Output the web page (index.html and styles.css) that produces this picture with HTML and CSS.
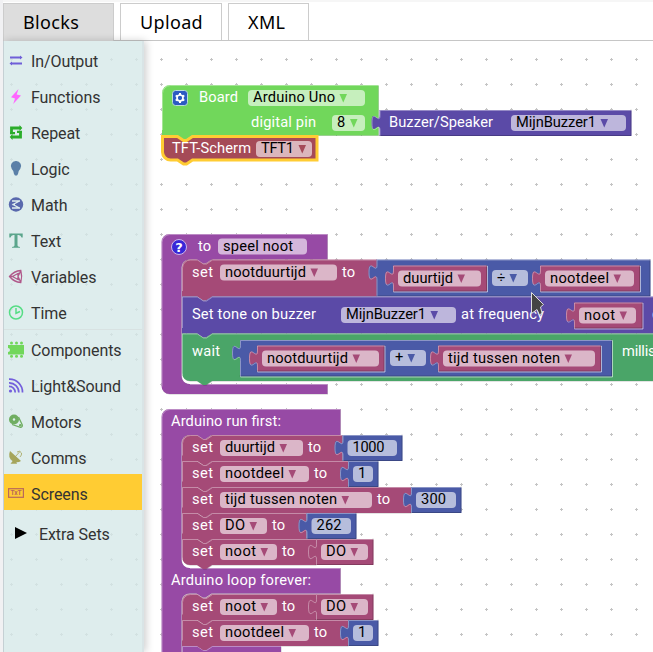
FILE: index.html
```
<!DOCTYPE html>
<html lang="en">
<head>
<meta charset="utf-8">
<title>Block editor</title>
<link rel="stylesheet" href="styles.css">
</head>
<body>
<div class="app">
  <nav class="tabs">
    <div class="tab tab-active">Blocks</div>
    <div class="tab tab-upload">Upload</div>
    <div class="tab tab-xml">XML</div>
  </nav>
  <main class="editor">
    <aside class="toolbox">
      <div class="item"><svg class="icon" viewBox="0 0 16 16"><path d="M2 4.500H13M3 10.500H14" stroke="#6f5fd8" stroke-width="2"/><path d="M12 2.500L14.500 4.500L12 6.500ZM4 8.500L1.500 10.500L4 12.500Z" fill="#6f5fd8"/></svg><span>In/Output</span></div>
      <div class="item"><svg class="icon" viewBox="0 0 16 16"><path d="M10.500 0L3 8.300L7 9.500L5.200 15L13 6.600L8.700 5.600Z" fill="#ff66ff"/></svg><span>Functions</span></div>
      <div class="item"><svg class="icon" viewBox="0 0 16 16"><path d="M3.500 9V3H12.500M12.500 6V12H3.500" fill="none" stroke="#2bad2b" stroke-width="2.800"/><path d="M11.500 0L14.300 3L11.500 6ZM4.500 9L1.700 12L4.500 15Z" fill="#2bad2b"/><path d="M2.100 7H7V9.300H2.100ZM9 5.700H13.900V8H9Z" fill="#2bad2b"/></svg><span>Repeat</span></div>
      <div class="item"><svg class="icon" viewBox="0 0 16 16"><path d="M8 0A5 5 0 0 0 3.800 8Q6 10 6 13L7 14.500H9L10 13Q10 10 12.200 8A5 5 0 0 0 8 0Z" fill="#5b80a8"/></svg><span>Logic</span></div>
      <div class="item"><svg class="icon" viewBox="0 0 16 16"><circle cx="8" cy="7.500" r="7.200" fill="#5969ad"/><path d="M4 4H12M4 11H12M11.500 4L5 7.500L11.500 11M4.500 7.500H7" fill="none" stroke="#dfeeee" stroke-width="1.300"/></svg><span>Math</span></div>
      <div class="item"><svg class="icon" viewBox="0 0 16 16"><path d="M1.300 .500H14.700V4.500H13.500Q13 1.900 10.500 1.900H9.500V12.500Q9.500 13.700 12 13.900V14.700H4V13.900Q6.500 13.700 6.500 12.500V1.900H5.500Q3 1.900 2.500 4.500H1.300Z" fill="#5ba58c"/></svg><span>Text</span></div>
      <div class="item"><svg class="icon" viewBox="0 0 16 16"><path d="M1.500 7.500Q6 2 12.800 1.500Q14.500 7.500 12.800 13.500Q6 13 1.500 7.500ZM1.500 7.500H4.500M10 7.500L12.800 1.700M10 7.500L12.800 13.300M4.500 7.500L10.800 4M4.500 7.500L10.800 11M10 4.500V10.500" fill="none" stroke="#b0588a" stroke-width="1.300"/></svg><span>Variables</span></div>
      <div class="item"><svg class="icon" viewBox="0 0 16 16"><circle cx="8" cy="7.500" r="6.500" fill="none" stroke="#56dd85" stroke-width="1.500"/><path d="M8 3V8.300L12 6.500" fill="none" stroke="#56dd85" stroke-width="1.500"/></svg><span>Time</span></div>
      <div class="separator"></div>
      <div class="item"><svg class="icon" viewBox="0 0 16 16"><path d="M0 3H16V12.500H0V10A2 2 0 0 0 0 6Z" fill="#71d75b"/><g fill="#71d75b"><circle cx="3.500" cy="1" r="1.500"/><circle cx="8.500" cy="1" r="1.500"/><circle cx="13.500" cy="1" r="1.500"/><circle cx="3.500" cy="14.300" r="1.500"/><circle cx="8.500" cy="14.300" r="1.500"/><circle cx="13.500" cy="14.300" r="1.500"/></g></svg><span>Components</span></div>
      <div class="item"><svg class="icon" viewBox="0 0 16 16"><path d="M1 1.200A13 13 0 0 1 14.500 14.500M1 4.800A9.500 9.500 0 0 1 10.800 14.500M1 8.400A6 6 0 0 1 7.200 14.500" fill="none" stroke="#735fdc" stroke-width="1.700"/><circle cx="2.500" cy="13" r="1.600" fill="#735fdc"/></svg><span>Light&amp;Sound</span></div>
      <div class="item"><svg class="icon" viewBox="0 0 16 16"><circle cx="6" cy="5.500" r="5" fill="#70ae62"/><circle cx="6" cy="5.500" r="1.200" fill="#dfeeee"/><path d="M10.500 3L14.300 11A1.800 1.800 0 0 1 12.500 13.300L4 10.500" fill="none" stroke="#70ae62" stroke-width="1.300"/><circle cx="12.300" cy="11.300" r="1.300" fill="#70ae62"/></svg><span>Motors</span></div>
      <div class="item"><svg class="icon" viewBox="0 0 16 16"><path d="M2 1Q-.500 8 4.500 11Q9 13.500 13 11Z" fill="#a5a55b"/><path d="M5 10.500L2.500 13.800H9L8 11Z" fill="#a5a55b"/><path d="M7 7L12 1.500M9 2Q12 0 13.500 3Q14 5 12 7" fill="none" stroke="#a5a55b" stroke-width=".8"/></svg><span>Comms</span></div>
      <div class="item item-selected"><svg class="icon" viewBox="0 0 16 16"><rect x=".6" y="2.700" width="14.800" height="8.600" fill="none" stroke="#b9695a" stroke-width="1.200"/><text x="8" y="9.400" class="icon-text">TxT</text></svg><span>Screens</span></div>
      <div class="item item-extra"><svg class="arrow" viewBox="0 0 12 12"><path d="M0 0L12 6L0 12Z"/></svg><span>Extra Sets</span></div>
    </aside>
    <svg class="workspace" id="workspace" width="653" height="652" viewBox="0 0 653 652">
      <defs>
        <pattern id="grid" x="-1" y="-3" width="25" height="25" patternUnits="userSpaceOnUse">
          <path d="M11 12.500H14M12.500 11V14" stroke="#c4c4c4" stroke-width="1"/>
        </pattern>
      </defs>
      <rect width="653" height="652" fill="url(#grid)"/>
      <g id="blocks"></g>
      <path class="pointer" d="M531.500 292.500V313.500L537 309.500L539.500 315L542 313L540.500 307L543.500 304.500Z"/>
    </svg>
  </main>
</div>
<script src="script.js"></script>
</body>
</html>
```
FILE: styles.css
```
body {
  margin: 0;
  overflow: hidden;
  background: #fff;
  font-family: Roboto, sans-serif;
}
.app {
  display: flex;
  flex-direction: column;
  box-sizing: border-box;
  width: 653px;
  height: 652px;
  border-left: 3px solid #f1f1f3;
  overflow: hidden;
}
.tabs {
  display: flex;
  gap: 6px;
  box-sizing: border-box;
  flex: none;
  height: 41px;
  padding-top: 3px;
  border-bottom: 1px solid #c6c6c6;
  background: linear-gradient(#f6f6f6 0 2px, #fff 2px);
}
.tab {
  box-sizing: border-box;
  height: 37px;
  padding-left: 19px;
  border: 1px solid #ccc;
  border-bottom: 0;
  font: 18px/37px "Noto Sans", sans-serif;
  letter-spacing: .35px;
  color: #000;
}
.tab-active { width: 111px; height: 38px; background: #ddd; }
.tab-upload { width: 102px; }
.tab-xml { width: 81px; }
.editor {
  position: relative;
  flex: 1;
}
.workspace {
  position: absolute;
  left: -3px;
  top: -41px;
  clip-path: inset(41px 0 0 4px);
}
.toolbox {
  position: relative;
  z-index: 1;
  box-sizing: border-box;
  width: 141px;
  height: 611px;
  border-left: 1px solid #c5d0d4;
  border-right: 2px solid #d9e4e6;
  background: rgba(214, 233, 233, .8);
  box-shadow: 2px 0 8px rgba(0, 0, 0, .2);
}
.item {
  display: flex;
  align-items: center;
  gap: 7px;
  height: 36px;
  padding-left: 4px;
  font-size: 16px;
  letter-spacing: -.08px;
  color: #333;
}
.item span { padding-top: 4px; }
.icon {
  width: 16px;
  height: 16px;
  margin-top: 3px;
  overflow: visible;
}
.icon-text {
  font: bold 6.500px Roboto, sans-serif;
  text-anchor: middle;
  fill: #b9695a;
}
.separator { height: 1px; background: #d8e2e2; }
.item-selected { background: #fc3; }
.item-extra { height: 44px; padding-left: 11px; gap: 12px; }
.arrow { width: 12px; height: 12px; margin-top: 2px; }
.label, .value {
  font-family: Roboto, sans-serif;
  font-size: 14.667px;
  fill: #fff;
}
.value { fill: #000; }
.pill { fill: #fff; fill-opacity: .6; }
.shade { fill: #000; fill-opacity: .22; }
.highlight { fill: none; stroke: #fff; stroke-opacity: .36; }
.selected { stroke: #fc3; stroke-width: 3px; }
.socket { fill: none; stroke: #fff; stroke-opacity: .55; }
.pointer { fill: #444; stroke: #ddd; stroke-width: 1px; }
.help { font: bold 13px "DejaVu Sans", sans-serif; fill: #fff; text-anchor: middle; }
```
FILE: script.js
```
const NS = 'http://www.w3.org/2000/svg';
const layer = document.getElementById('blocks');
const GREEN = '#71d75b', BLUE = '#4a5aa7', VIOLET = '#5b4aa7', ROSE = '#a54a77',
  PURPLE = '#974aa5', TEAL = '#4aa568', RED = '#a54a57';
const TAB_UP = 'V20c0,-10 -8,8 -8,-7.5s8,2.5 8,-7.5';

function add(tag, attrs, text) {
  const el = document.createElementNS(NS, tag);
  for (const k in attrs) el.setAttribute(k, attrs[k]);
  if (text) el.textContent = text;
  layer.append(el);
}
function at(x, y) { return `translate(${x} ${y})`; }

// Statement block: optional rounded corners and bottom notch.
function stack(x, y, w, h, color, o = {}) {
  const top = (o.round ? 'V8A8,8 0 0,1 8,0' : 'V0') + (o.hat ? '' : 'H15l6,4h3l6,-4') + 'H' + w;
  const foot = (o.plain ? '' : 'H30l-6,4h-3l-6,-4') + (o.end ? 'H8A8,8 0 0,1 0,' + (h - 8) : 'H0');
  const d = `M0,8${top}V${h}${foot}Z`;
  if (!o.selected) add('path', {d, class: 'shade', transform: at(x + .5, y + .5)});
  add('path', {d, fill: color, transform: at(x, y), class: o.selected ? 'selected' : ''});
  if (!o.selected) add('path', {d: `M0,${h - 6}${top}`, class: 'highlight', transform: at(x + .5, y + .5)});
}
// Value block with a puzzle tab on its left edge.
function value(x, y, w, h, color, inset) {
  const d = `M0,0H${w}V${h}H0${TAB_UP}Z`;
  add('path', {d, fill: color, transform: at(x, y)});
  add('path', {d: `M0,${h}H${w}V0`, fill: 'none', stroke: '#000', 'stroke-opacity': .2, transform: at(x - .5, y - .5)});
  add('path', {d: `M0,${h}${TAB_UP}V0H${w}`, class: 'highlight', transform: at(x + .5, y + .5)});
  if (inset) add('path', {d: `M0,${h}H${w}V0`, class: 'socket', transform: at(x + .5, y + .5)});
}
function label(x, y, w, text) {
  add('text', {x, y, textLength: w, class: 'label'}, text);
}
function field(x, y, w, text, tw, color) {
  add('rect', {x, y, width: w, height: 16, rx: 4, class: 'pill'});
  add('text', {x: x + 5, y: y + 12, textLength: tw, class: 'value'}, text);
  if (color) {
    const a = x + tw + 9.5;
    add('path', {d: `M${a},${y + 4}h7.500l-3.750,8.500Z`, fill: color});
  }
}

// Board
stack(162, 85, 216.5, 50.5, GREEN, {round: true, hat: true});
add('rect', {x: 172.5, y: 90.5, width: 15, height: 15, rx: 3, fill: '#2c5ac2', stroke: '#b8dcd9'});
add('path', {d: 'M180,93v10M175.700,95.500l8.600,5M175.700,100.500l8.600,-5', stroke: '#fff', 'stroke-width': 2});
add('circle', {cx: 180, cy: 98, r: 3, fill: '#2c5ac2', stroke: '#fff', 'stroke-width': 1.7});
label(199, 102, 39, 'Board');
field(248, 90, 117, 'Arduino Uno', 82, GREEN);
label(251, 127, 65, 'digital pin');
field(332, 115, 33, '8', 8.5, GREEN);
value(379.5, 110, 252, 26, VIOLET);
label(389, 127, 104, 'Buzzer/Speaker');
field(511, 115, 115, 'MijnBuzzer1', 80, VIOLET);
stack(162.5, 136.5, 154.5, 23.5, RED, {end: true, selected: true});
label(172, 153, 79, 'TFT-Scherm');
field(256, 141, 56, 'TFT1', 33, RED);

// Procedure definition
const proc = 'M0,8A8,8 0 0,1 8,0H166V25.500H50l-6,4h-3l-6,-4H28a8,8 0 0,0 -8,8V142a8,8 0 0,0 8,8H166V160H8A8,8 0 0,1 0,152Z';
add('path', {d: proc, class: 'shade', transform: at(162, 234.5)});
add('path', {d: proc, fill: PURPLE, transform: at(161.5, 234)});
add('path', {d: 'M0,152V8A8,8 0 0,1 8,0H165M28,150H165', class: 'highlight', transform: at(162, 234.5)});
add('circle', {cx: 179, cy: 247, r: 7.5, fill: '#3827d8', stroke: '#cdb5e8'});
add('text', {x: 179, y: 251.5, class: 'help'}, '?');
label(198, 251, 13, 'to');
field(218, 238.5, 89, 'speel noot', 70);
stack(182, 259.5, 195, 37, ROSE, {round: true});
label(192, 277, 21, 'set');
field(220, 264.5, 117, 'nootduurtijd', 81, ROSE);
label(342, 277, 13, 'to');
value(376.5, 259.5, 274, 37, BLUE);
value(393, 265.5, 94, 26, ROSE, true);
field(398, 270.5, 83, 'duurtijd', 50, ROSE);
field(492, 270, 36, '÷', 8, BLUE);
value(540, 265.5, 100, 26, ROSE, true);
field(545, 270.5, 89, 'nootdeel', 59, ROSE);
stack(182, 296.5, 480, 37, VIOLET);
label(192, 319, 124, 'Set tone on buzzer');
field(341, 307, 115, 'MijnBuzzer1', 80, VIOLET);
label(461, 319, 83, 'at frequency');
value(574, 302.5, 68.5, 26, ROSE, true);
field(579, 307.5, 57, 'noot', 31, ROSE);
label(652, 319, 56, 'duration');
stack(182, 333.5, 480, 47.5, TEAL, {end: true});
label(192, 356, 28, 'wait');
value(240, 340, 372, 36.5, BLUE, true);
value(257, 345.5, 127.5, 26, ROSE, true);
field(262, 350.5, 117, 'nootduurtijd', 81, ROSE);
field(390, 350, 36, '+', 8, BLUE);
value(438, 345.5, 163, 26, ROSE, true);
field(443, 350.5, 152, 'tijd tussen noten', 112, ROSE);
label(622, 356, 80, 'milliseconds');

// Main program
const main = 'M0,8A8,8 0 0,1 8,0H179V26H50l-6,4h-3l-6,-4H28a8,8 0 0,0 -8,8V151a8,8 0 0,0 8,8H179V184.500H50l-6,4h-3l-6,-4H28a8,8 0 0,0 -8,8V260H0Z';
add('path', {d: main, class: 'shade', transform: at(162, 409.5)});
add('path', {d: main, fill: PURPLE, transform: at(161.5, 409)});
add('path', {d: 'M0,250V8A8,8 0 0,1 8,0H178M28,159H178', class: 'highlight', transform: at(162, 409.5)});
label(171, 426, 110, 'Arduino run first:');
label(171, 585, 140, 'Arduino loop forever:');

function setRow(y, name, tw, pillW, edge, val, vw, valueTw, o = {}) {
  stack(182, y, edge - 182, 26, ROSE, o);
  label(192, y + 17, 21, 'set');
  field(220, y + 5, pillW, name, tw, ROSE);
  label(225 + pillW, y + 17, 13, 'to');
  const isVariable = val === 'DO';
  value(edge, y, vw, 26, isVariable ? ROSE : BLUE);
  field(edge + 5, y + 5, vw - 10.5, val, valueTw, isVariable && ROSE);
}
setRow(435, 'duurtijd', 50, 83, 342.5, '1000', 60, 32, {round: true});
setRow(461, 'nootdeel', 59, 89, 348, '1', 30.5, 8);
setRow(487, 'tijd tussen noten', 112, 152, 411, '300', 50.5, 25);
setRow(513, 'DO', 20, 47, 306.5, '262', 50, 25);
setRow(539, 'noot', 31, 57, 316, 'DO', 57.5, 20, {end: true});
setRow(594, 'noot', 31, 57, 316, 'DO', 57.5, 20, {round: true});
setRow(620, 'nootdeel', 59, 89, 348, '1', 30.5, 8);
stack(182, 646, 99, 26, PURPLE);
// The last row's notch reaches into the block beneath it.
add('path', {d: 'M197,646l6,4h3l6,-4Z', fill: ROSE});
```
